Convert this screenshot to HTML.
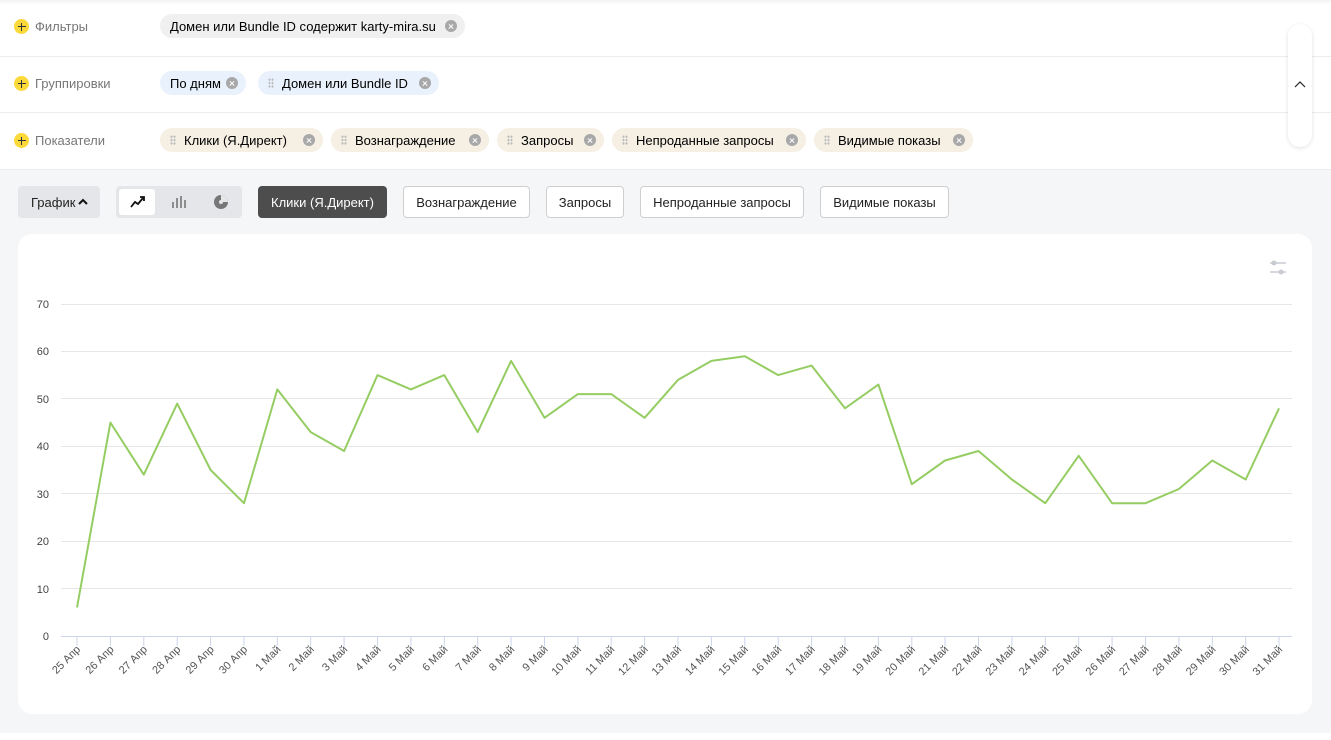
<!DOCTYPE html><html><head><meta charset="utf-8"><style>
*{box-sizing:border-box;margin:0;padding:0}
body{width:1331px;height:740px;position:relative;background:#fff;font-family:"Liberation Sans",sans-serif;font-size:13px;color:#000;overflow:hidden}
.row{position:absolute;left:0;width:1331px;height:57px;border-bottom:1px solid #ececec}
.lbl{position:absolute;left:14px;color:#777;font-size:13px;display:flex;align-items:center;gap:6px}
.plus{width:15px;height:15px;border-radius:50%;background:#fcd93a;position:relative;display:inline-block}
.plus:before,.plus:after{content:"";position:absolute;background:#333;left:3.5px;top:7px;width:8px;height:1px}
.plus:after{left:7px;top:3.5px;width:1px;height:8px}
.chip{position:absolute;height:24px;border-radius:12px;display:flex;align-items:center;padding-left:10px;font-size:13px;white-space:nowrap}
.chip .x{position:absolute;right:8px;top:6px;width:12px;height:12px;border-radius:50%;background:#a8a8a8}
.chip .x:before,.chip .x:after{content:"";position:absolute;left:3px;top:5.5px;width:6px;height:1.3px;background:#fff;transform:rotate(45deg)}
.chip .x:after{transform:rotate(-45deg)}
.g{background:#f0f0f0}.b{background:#e9f2fc}.m{background:#f5efe4}
.dots{width:6px;height:10px;margin-right:8px;background-image:radial-gradient(circle,#bbb 1px,transparent 1.2px);background-size:3px 3.4px}
.btn{position:absolute;top:186px;height:32px;border:1px solid #cfcfcf;border-radius:4px;background:#fff;display:flex;align-items:center;justify-content:center;font-size:13px;color:#222}
</style></head><body>
<div style="position:absolute;left:0;top:0;width:1331px;height:4px;background:linear-gradient(#f2f2f2,#fff)"></div>
<div class="row" style="top:0"><div class="lbl" style="top:19px"><span class="plus"></span>Фильтры</div></div>
<div class="row" style="top:56px"><div class="lbl" style="top:20px"><span class="plus"></span>Группировки</div></div>
<div class="row" style="top:113px"><div class="lbl" style="top:20px"><span class="plus"></span>Показатели</div></div>
<div class="chip g" style="left:160px;top:14px;width:305px">Домен или Bundle ID содержит&nbsp;<b style="font-weight:normal;color:#000">karty-mira.su</b><span class="x"></span></div>
<div class="chip b" style="left:160px;top:71px;width:86px">По дням<span class="x"></span></div>
<div class="chip b" style="left:258px;top:71px;width:181px"><span class="dots"></span>Домен или Bundle ID<span class="x"></span></div>
<div class="chip m" style="left:160px;top:128px;width:163px"><span class="dots"></span>Клики (Я.Директ)<span class="x"></span></div>
<div class="chip m" style="left:331px;top:128px;width:158px"><span class="dots"></span>Вознаграждение<span class="x"></span></div>
<div class="chip m" style="left:497px;top:128px;width:107px"><span class="dots"></span>Запросы<span class="x"></span></div>
<div class="chip m" style="left:612px;top:128px;width:194px"><span class="dots"></span>Непроданные запросы<span class="x"></span></div>
<div class="chip m" style="left:814px;top:128px;width:159px"><span class="dots"></span>Видимые показы<span class="x"></span></div>
<div style="position:absolute;left:1288px;top:24px;width:24px;height:123px;border-radius:12px;background:#fff;box-shadow:0 1px 4px rgba(0,0,0,.12)"><svg width="24" height="123" style="position:absolute;left:0;top:0"><path d="M7 63 L12 58 L17 63" fill="none" stroke="#222" stroke-width="1.2"/></svg></div>
<div style="position:absolute;left:0;top:170px;width:1331px;height:563px;background:#f5f6f8"></div>
<div style="position:absolute;left:18px;top:186px;width:82px;height:32px;background:#e5e6e9;border-radius:4px;display:flex;align-items:center;padding-left:13px;font-size:13px;color:#222">График<svg width="12" height="10" style="margin-left:2px"><path d="M2 7 L6 3 L10 7" fill="none" stroke="#111" stroke-width="2"/></svg></div>
<div style="position:absolute;left:116px;top:186px;width:126px;height:32px;background:#e5e6e9;border-radius:4px">
<div style="position:absolute;left:3px;top:3px;width:36px;height:26px;background:#fff;border-radius:3px"></div>
<svg width="126" height="32" style="position:absolute;left:0;top:0"><path d="M15 21 L19 16 L22 18 L27 12 M24 11 L28 11 L28 15" fill="none" stroke="#111" stroke-width="1.8"/>
<g stroke="#777" stroke-width="1.6"><path d="M57 22V16M61 22V12M65 22V10M69 22V14"/></g>
<circle cx="105" cy="16" r="7" fill="#777"/><path d="M105 16 L105 9 A7 7 0 0 1 112 16 Z" fill="#e5e6e9"/><circle cx="105" cy="16" r="2" fill="#e5e6e9"/></svg></div>
<div class="btn" style="left:258px;width:129px;background:#4d4d4d;border-color:#4d4d4d;color:#fff">Клики (Я.Директ)</div>
<div class="btn" style="left:403px;width:127px">Вознаграждение</div>
<div class="btn" style="left:546px;width:78px">Запросы</div>
<div class="btn" style="left:640px;width:164px">Непроданные запросы</div>
<div class="btn" style="left:820px;width:129px">Видимые показы</div>
<div style="position:absolute;left:18px;top:234px;width:1294px;height:480px;background:#fff;border-radius:14px"></div>
<svg width="1331" height="740" style="position:absolute;left:0;top:0" font-family="Liberation Sans,sans-serif" font-size="11" fill="#444">
<g stroke="#c8cbd2" stroke-width="1.5"><path d="M1270 263h16M1270 272h16"/></g><circle cx="1274" cy="263" r="2.5" fill="#c8cbd2"/><circle cx="1281" cy="272" r="2.5" fill="#c8cbd2"/>
<g stroke="#e6e6e6" stroke-width="1"><path d="M61 304.5H1292M61 351.5H1292M61 398.5H1292M61 446.5H1292M61 493.5H1292M61 541.5H1292M61 588.5H1292"/></g>
<path d="M61 636.5H1292" stroke="#ccd6eb"/>
<g text-anchor="end"><text x="49" y="308">70</text><text x="49" y="355">60</text><text x="49" y="403">50</text><text x="49" y="450">40</text><text x="49" y="498">30</text><text x="49" y="545">20</text><text x="49" y="593">10</text><text x="49" y="640">0</text></g>
<polyline fill="none" stroke="#95cd63" stroke-width="2" stroke-linejoin="round" points="77,607.5 110.4,422.6 143.8,474.7 177.2,403.6 210.6,470 244,503.2 277.3,389.4 310.7,432.1 344.1,451 377.5,375.1 410.9,389.4 444.3,375.1 477.7,432.1 511.1,360.9 544.5,417.8 577.9,394.1 611.2,394.1 644.6,417.8 678,379.9 711.4,360.9 744.8,356.2 778.2,375.1 811.6,365.6 845,408.3 878.4,384.6 911.8,484.2 945.1,460.5 978.5,451 1011.9,479.5 1045.3,503.2 1078.7,455.8 1112.1,503.2 1145.5,503.2 1178.9,489 1212.3,460.5 1245.7,479.5 1279,408.3"/>
<g id="ax" text-anchor="end" font-size="11" fill="#555"></g>
</svg>
<script>
var l=["25 Апр","26 Апр","27 Апр","28 Апр","29 Апр","30 Апр"];for(var d=1;d<=31;d++)l.push(d+" Май");
var g=document.getElementById("ax"),s="";
for(var i=0;i<37;i++){var x=77+i*33.39;s+='<path d="M'+x.toFixed(1)+' 637V646" stroke="#ccd6eb"/><text transform="translate('+(x+4).toFixed(1)+',650) rotate(-45)">'+l[i]+'</text>';}
g.innerHTML=s;
</script>
</body></html>
